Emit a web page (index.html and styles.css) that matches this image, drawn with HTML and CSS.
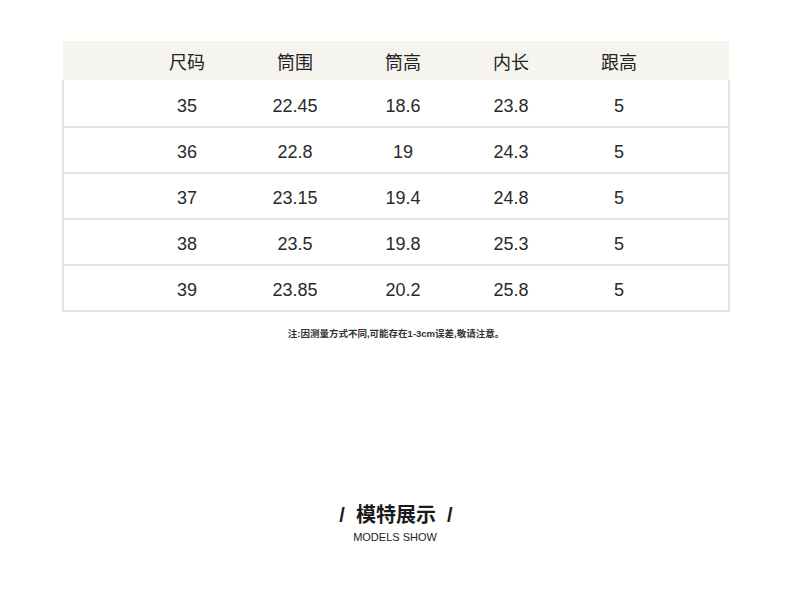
FILE: index.html
```html
<!DOCTYPE html>
<html lang="zh">
<head>
<meta charset="utf-8">
<link rel="stylesheet" href="styles.css">
</head>
<body>
<div class="page">
  <div class="table">
    <div class="row head">
      <span>尺码</span><span>筒围</span><span>筒高</span><span>内长</span><span>跟高</span>
    </div>
    <div class="body">
      <div class="row"><span>35</span><span>22.45</span><span>18.6</span><span>23.8</span><span>5</span></div>
      <div class="row"><span>36</span><span>22.8</span><span>19</span><span>24.3</span><span>5</span></div>
      <div class="row"><span>37</span><span>23.15</span><span>19.4</span><span>24.8</span><span>5</span></div>
      <div class="row"><span>38</span><span>23.5</span><span>19.8</span><span>25.3</span><span>5</span></div>
      <div class="row"><span>39</span><span>23.85</span><span>20.2</span><span>25.8</span><span>5</span></div>
    </div>
  </div>
  <p class="note">注:因测量方式不同,可能存在1-3cm误差,敬请注意。</p>
  <div class="title">
    <h2>/&nbsp; 模特展示 &nbsp;/</h2>
    <p>MODELS SHOW</p>
  </div>
</div>
</body>
</html>
```

FILE: styles.css
```css
html, body {
  margin: 0;
  padding: 0;
  background: #fff;
}
body {
  font-family: "Liberation Sans", "Noto Sans CJK SC", sans-serif;
  color: #222;
  width: 790px;
  height: 598px;
  overflow: hidden;
}
.page {
  padding-top: 41px;
}
.table {
  width: 666px;
  margin-left: 63px;
}
.row {
  display: grid;
  grid-template-columns: repeat(5, 108px);
  padding-left: 70px;
  align-items: center;
}
.row span {
  text-align: center;
}
.head {
  height: 39px;
  background: #f6f4ee;
  font-size: 18px;
  color: #222;
}
.body {
  margin-left: -1px;
  width: 664px;
  border-left: 2px solid #e2e2e2;
  border-right: 2px solid #e2e2e2;
}
.body .row {
  height: 39px;
  padding-top: 5px;
  border-bottom: 2px solid #e2e2e2;
  font-size: 18px;
  color: #2a2a2a;
  padding-left: 69px;
}
.body .row:first-child {
  height: 40px;
  padding-top: 6px;
}
.note {
  margin: 14px 0 0;
  text-align: center;
  font-size: 9.5px;
  font-weight: 600;
  color: #333;
  padding-left: 2px;
}
.title {
  margin-top: 162px;
  text-align: center;
}
.title h2 {
  margin: 0;
  font-size: 20px;
  font-weight: bold;
  color: #1a1a1a;
  line-height: 26px;
  padding-left: 2px;
}
.title p {
  margin: 3px 0 0;
  font-size: 11px;
  color: #222;
}
```
